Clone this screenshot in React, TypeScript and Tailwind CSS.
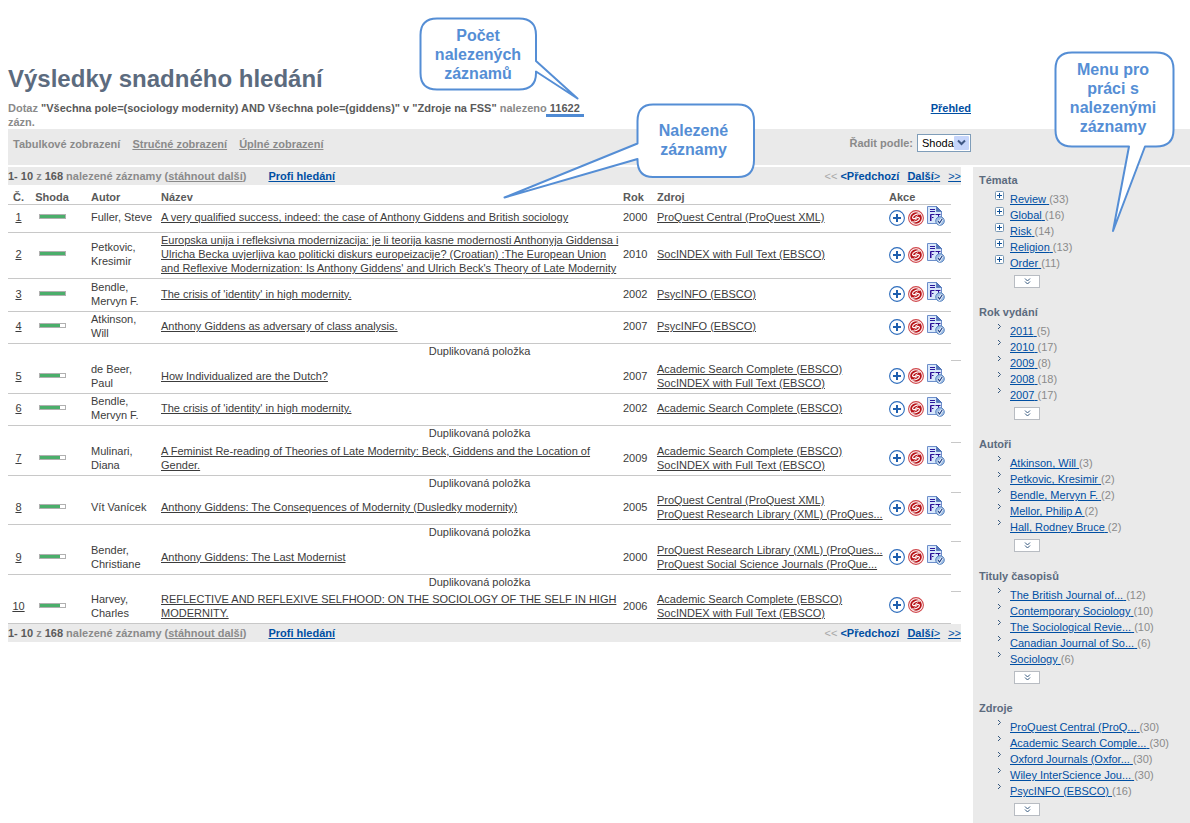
import type { ReactNode } from "react";

type Result = {
  no: number;
  match: number;
  author: string;
  title: string;
  year: number;
  sources: string[];
  duplicate?: boolean;
  fullText?: boolean;
};

const results: Result[] = [
  { no: 1, match: 100, author: "Fuller, Steve", title: "A very qualified success, indeed: the case of Anthony Giddens and British sociology", year: 2000, sources: ["ProQuest Central (ProQuest XML)"], fullText: true },
  { no: 2, match: 100, author: "Petkovic, Kresimir", title: "Europska unija i refleksivna modernizacija: je li teorija kasne modernosti Anthonyja Giddensa i Ulricha Becka uvjerljiva kao politicki diskurs europeizacije? (Croatian) :The European Union and Reflexive Modernization: Is Anthony Giddens' and Ulrich Beck's Theory of Late Modernity", year: 2010, sources: ["SocINDEX with Full Text (EBSCO)"], fullText: true },
  { no: 3, match: 100, author: "Bendle, Mervyn F.", title: "The crisis of 'identity' in high modernity.", year: 2002, sources: ["PsycINFO (EBSCO)"], fullText: true },
  { no: 4, match: 80, author: "Atkinson, Will", title: "Anthony Giddens as adversary of class analysis.", year: 2007, sources: ["PsycINFO (EBSCO)"], fullText: true },
  { no: 5, match: 80, author: "de Beer, Paul", title: "How Individualized are the Dutch?", year: 2007, sources: ["Academic Search Complete (EBSCO)", "SocINDEX with Full Text (EBSCO)"], duplicate: true, fullText: true },
  { no: 6, match: 80, author: "Bendle, Mervyn F.", title: "The crisis of 'identity' in high modernity.", year: 2002, sources: ["Academic Search Complete (EBSCO)"], fullText: true },
  { no: 7, match: 80, author: "Mulinari, Diana", title: "A Feminist Re-reading of Theories of Late Modernity: Beck, Giddens and the Location of Gender.", year: 2009, sources: ["Academic Search Complete (EBSCO)", "SocINDEX with Full Text (EBSCO)"], duplicate: true, fullText: true },
  { no: 8, match: 80, author: "Vít Vanícek", title: "Anthony Giddens: The Consequences of Modernity (Dusledky modernity)", year: 2005, sources: ["ProQuest Central (ProQuest XML)", "ProQuest Research Library (XML) (ProQues..."], duplicate: true, fullText: true },
  { no: 9, match: 80, author: "Bender, Christiane", title: "Anthony Giddens: The Last Modernist", year: 2000, sources: ["ProQuest Research Library (XML) (ProQues...", "ProQuest Social Science Journals (ProQue..."], duplicate: true, fullText: true },
  { no: 10, match: 80, author: "Harvey, Charles", title: "REFLECTIVE AND REFLEXIVE SELFHOOD: ON THE SOCIOLOGY OF THE SELF IN HIGH MODERNITY.", year: 2006, sources: ["Academic Search Complete (EBSCO)", "SocINDEX with Full Text (EBSCO)"], duplicate: true },
];

type Facet = { title: string; tree?: boolean; items: [string, number][] };

const facets: Facet[] = [
  { title: "Témata", tree: true, items: [["Review", 33], ["Global", 16], ["Risk", 14], ["Religion", 13], ["Order", 11]] },
  { title: "Rok vydání", items: [["2011", 5], ["2010", 17], ["2009", 8], ["2008", 18], ["2007", 17]] },
  { title: "Autoři", items: [["Atkinson, Will", 3], ["Petkovic, Kresimir", 2], ["Bendle, Mervyn F.", 2], ["Mellor, Philip A", 2], ["Hall, Rodney Bruce", 2]] },
  { title: "Tituly časopisů", items: [["The British Journal of...", 12], ["Contemporary Sociology", 10], ["The Sociological Revie...", 10], ["Canadian Journal of So...", 6], ["Sociology", 6]] },
  { title: "Zdroje", items: [["ProQuest Central (ProQ...", 30], ["Academic Search Comple...", 30], ["Oxford Journals (Oxfor...", 30], ["Wiley InterScience Jou...", 30], ["PsycINFO (EBSCO)", 16]] },
];

function PlusIcon() {
  return (
    <svg width="16" height="16" viewBox="0 0 16 16" aria-hidden="true">
      <circle cx="8" cy="8" r="7.4" fill="#fff" stroke="#2c6cbc" strokeWidth="1.1" />
      <path d="M8 4v8M4 8h8" stroke="#1f5fae" strokeWidth="2" />
    </svg>
  );
}

function SfxIcon() {
  return (
    <svg width="16" height="16" viewBox="0 0 16 16" aria-hidden="true">
      <circle cx="8" cy="8" r="7.4" fill="#fff" stroke="#d0484c" strokeWidth="1.1" />
      <circle cx="8" cy="8" r="5.8" fill="#b81419" />
      <path d="M12 4.200C9 3.200 4.600 5.400 4.600 7.600c0 1.900 2.700.9 3.900.3 1.300-.7 3-.6 2.900.8-.1 2-4 3.900-7.400 3.100" fill="none" stroke="#fff" strokeWidth="1.200" />
      <path d="M7 7.500L9.800 5.600M6.400 10.400L9.200 8.600" stroke="#fff" strokeWidth=".8" />
    </svg>
  );
}

function FullTextIcon() {
  return (
    <svg width="18" height="20" viewBox="0 0 18 20" aria-hidden="true">
      <path d="M.5.5h9L14.500 5.500V17.500H.500z" fill="#d9e8fb" stroke="#6d8fcb" />
      <path d="M9.500.500V5.500H14.500z" fill="#5578bb" stroke="#3d63ac" strokeWidth=".6" />
      <path d="M3 3.500h5M3 5.500h5" stroke="#2b1a9c" />
      <path d="M3.500 15V8.500H7.500M3.500 11.500H6.500M8.500 8.500h5M11.500 8.500V12" fill="none" stroke="#2b0f96" />
      <path d="M4.500 15V9" stroke="#8478c8" />
      <circle cx="13" cy="15" r="4.300" fill="#9fbfe6" stroke="#5d86c0" />
      <path d="M10.900 14.800l1.700 2.200L15.300 12.700" fill="none" stroke="#fff" strokeWidth="2.600" />
      <path d="M10.900 14.800l1.700 2.200L15.300 12.700" fill="none" stroke="#1d3f86" strokeWidth="1.200" />
    </svg>
  );
}

function TreeIcon() {
  return (
    <svg width="9" height="9" viewBox="0 0 9 9" aria-hidden="true">
      <rect x=".5" y=".5" width="8" height="8" rx="1" fill="#fff" stroke="#7898b5" />
      <path d="M4.500 2v5M2 4.500h5" stroke="#0d4f96" />
    </svg>
  );
}

function ChevronIcon() {
  return (
    <svg width="9" height="9" viewBox="0 0 9 9" aria-hidden="true">
      <path d="M3 1l2.500 2.500L3 6" fill="none" stroke="#36597f" />
    </svg>
  );
}

function MatchBar({ value }: { value: number }) {
  return (
    <div role="img" aria-label={`${value} %`} className="mx-auto mb-1 h-[5px] w-[27px] border border-[#b0b0b0] bg-white">
      <div className="h-full bg-[#4bae6b]" style={{ width: `${value}%` }} />
    </div>
  );
}

function ResultRows({ item }: { item: Result }) {
  const cell = "border-b border-[#c8c8c8] px-0 pt-0 align-middle";
  return (
    <>
      {item.duplicate && (
        <tr className="h-[17px]">
          <td colSpan={7} className="p-0 text-center align-top leading-[14px]">Duplikovaná položka</td>
          <td className="border-b border-[#c8c8c8] p-0" />
        </tr>
      )}
      <tr className={item.no === 1 ? "h-[28px]" : item.no === 2 ? "h-[46px]" : item.no % 2 ? "h-[33px]" : "h-[32px]"}>
        <td className={`${cell} pb-[3px] text-center`}><a href="#zaznam" className="underline">{item.no}</a></td>
        <td className={`${cell} pr-4 pb-0`}><MatchBar value={item.match} /></td>
        <td className={`${cell} pr-2 pb-[3px]`}>{item.author}</td>
        <td className={`${cell} pb-[3px]`}><a href="#zaznam" className="underline">{item.title}</a></td>
        <td className={`${cell} pb-[3px]`}>{item.year}</td>
        <td className={`${cell} pb-[3px] whitespace-nowrap`}>
          {item.sources.map((s) => (
            <a key={s} href="#zdroj" className="block w-fit underline">{s}</a>
          ))}
        </td>
        <td className={`${cell} pb-0`}>
          <div className="flex items-end gap-[3px] pb-[6px]">
            <button type="button" aria-label="Přidat do schránky"><PlusIcon /></button>
            <button type="button" aria-label="SFX"><SfxIcon /></button>
            {item.fullText && <button type="button" aria-label="Plný text"><FullTextIcon /></button>}
          </div>
        </td>
        <td className="p-0" />
      </tr>
    </>
  );
}

function Pager() {
  return (
    <div className="flex h-[18px] items-center justify-between bg-[#eaeaea] text-[11px] font-bold text-[#8a8a8a]">
      <div className="flex gap-[22px]">
        <span>
          <span className="text-[#5a5a5a]">1- 10</span> z <span className="text-[#5a5a5a]">168</span> nalezené záznamy (
          <a href="#dalsi" className="underline">stáhnout další</a>)
        </span>
        <a href="#profi" className="text-[#004fa3] underline">Profi hledání</a>
      </div>
      <div className="flex gap-2 text-[#004fa3]">
        <span><span className="font-normal text-[#a8a8a8]">&lt;&lt;</span> &lt;Předchozí</span>
        <a href="#dalsi" className="underline">Další<span className="font-normal">&gt;</span></a>
        <a href="#konec" className="font-normal underline">&gt;&gt;</a>
      </div>
    </div>
  );
}

function FacetSection({ facet }: { facet: Facet }) {
  return (
    <section className="mb-[17px]">
      <h2 className="text-[11px] leading-[14px] font-bold text-[#5c6b7e]">{facet.title}</h2>
      <ul className="mt-1 mb-1 pl-4">
        {facet.items.map(([label, count]) => (
          <li key={label} className="flex h-4 gap-[6px] whitespace-nowrap text-[#8a8a8a]">
            {facet.tree ? <TreeIcon /> : <ChevronIcon />}
            <span className="leading-4">
              <a href="#filtr" className="text-[#004fa3] underline">{label} </a>({count})
            </span>
          </li>
        ))}
      </ul>
      <button type="button" aria-label={`Další: ${facet.title}`} className="ml-[35px] flex h-[13px] w-[26px] items-center justify-center border border-[#b8bcc2] bg-white">
        <svg width="7" height="7" viewBox="0 0 7 7" aria-hidden="true">
          <path d="M1 .5L3.500 3 6 .500M1 3.500L3.500 6 6 3.500" fill="none" stroke="#36597f" />
        </svg>
      </button>
    </section>
  );
}

function Callout({ place, box, children, width, height, path }: {
  place: string; box: string; children: ReactNode; width: number; height: number; path: string;
}) {
  return (
    <div className={`pointer-events-none absolute ${place}`}>
      <svg width={width} height={height} viewBox={`0 0 ${width} ${height}`} aria-hidden="true">
        <path d={path} fill="#fff" stroke="#558ed5" strokeWidth="2" strokeLinejoin="round" />
      </svg>
      <p className={`absolute flex items-center justify-center text-center text-[16px] leading-[19px] font-bold text-[#558ed5] ${box}`}>{children}</p>
    </div>
  );
}

export default function App() {
  return (
    <div className="relative flex min-h-screen flex-col overflow-hidden bg-white pl-2 font-['Liberation_Sans',Arial,sans-serif] text-[11px] leading-[14px] text-[#3c3c3c]">
      <header className="pt-[64px]">
        <h1 className="text-[24px] leading-[30px] font-bold text-[#5c6b7e]">Výsledky snadného hledání</h1>
        <div className="flex items-start justify-between pt-[7px] pr-[219px] font-bold">
          <p className="max-w-[596px] text-[#8a8a8a]">
            Dotaz <span className="text-[#5a5a5a]">"Všechna pole=(sociology modernity) AND Všechna pole=(giddens)" v "Zdroje na FSS"</span> nalezeno{" "}
            <span className="relative text-[#5a5a5a]">
              11622
              <span className="absolute top-full -right-1 -left-1 h-[3px] bg-[#4f8ad3]" />
            </span>{" "}
            zázn.
          </p>
          <a href="#prehled" className="text-[#004fa3] underline">Přehled</a>
        </div>
      </header>

      <div className="flex h-[36px] items-start justify-between bg-[#eaeaea] pr-[219px] pl-[5px] font-bold text-[#8a8a8a]">
        <nav className="flex gap-3 pt-2">
          <span>Tabulkové zobrazení</span>
          <a href="#strucne" className="underline">Stručné zobrazení</a>
          <a href="#uplne" className="underline">Úplné zobrazení</a>
        </nav>
        <div className="flex items-center gap-1 pt-[5px]">
          <label htmlFor="sort">Řadit podle:</label>
          <div className="relative">
            <select id="sort" className="h-[18px] w-[54px] appearance-none border border-[#7f9db9] bg-white pl-1 text-[11px] leading-4 font-normal text-black">
              <option>Shoda</option>
            </select>
            <svg width="15" height="14" viewBox="0 0 15 14" className="pointer-events-none absolute top-[2px] right-[2px]" aria-hidden="true">
              <rect width="15" height="14" rx="1" fill="#c6d5fb" />
              <path d="M4 4.500l3.500 3.500L11 4.500" fill="none" stroke="#3f5784" strokeWidth="2" />
            </svg>
          </div>
        </div>
      </div>

      <div className="mt-[2px] flex grow gap-3">
        <main className="min-w-0 flex-1">
          <Pager />
          <table className="w-full table-fixed border-separate border-spacing-0">
            <colgroup>
              <col className="w-[21px]" />
              <col className="w-[62px]" />
              <col className="w-[70px]" />
              <col />
              <col className="w-[34px]" />
              <col className="w-[232px]" />
              <col className="w-[62px]" />
              <col className="w-[10px]" />
            </colgroup>
            <thead>
              <tr className="h-[20px] text-left align-bottom text-[#5a5a5a] [&>th]:p-0 [&>th:not(:last-child)]:border-b [&>th:not(:last-child)]:border-[#c8c8c8]">
                <th className="text-center">Č.</th>
                <th><span className="block pr-4 text-center">Shoda</span></th>
                <th>Autor</th>
                <th>Název</th>
                <th>Rok</th>
                <th>Zdroj</th>
                <th>Akce</th>
                <th />
              </tr>
            </thead>
            <tbody>
              {results.map((r) => <ResultRows key={r.no} item={r} />)}
            </tbody>
          </table>
          <Pager />
        </main>
        <aside className="w-[217px] shrink-0 bg-[#eaeaea] pt-[6px] pl-[6px]">
          {facets.map((f) => <FacetSection key={f.title} facet={f} />)}
        </aside>
      </div>

      <Callout
        place="top-[17px] left-[419px]"
        box="top-0 left-0 h-[74px] w-[118px]"
        width={160}
        height={83}
        path="M18 1.500H100Q117 1.500 117 18V44L158.500 81.500 117 54.500V56Q117 72.500 100 72.500H18Q1.500 72.500 1.500 56V18Q1.500 1.500 18 1.500Z"
      >
        Počet<br />nalezených<br />záznamů
      </Callout>
      <Callout
        place="top-[103px] left-[503px]"
        box="top-0 left-[131px] h-[74px] w-[119px]"
        width={253}
        height={96}
        path="M150 1.500H235Q251 1.500 251 18V57Q251 74 235 74H150Q134.500 74 134.500 57V56L1.500 94.500 134.500 40.500V18Q134.500 1.500 150 1.500Z"
      >
        Nalezené<br />záznamy
      </Callout>
      <Callout
        place="top-[51px] right-[15px]"
        box="top-0 left-0 h-[94px] w-[118px]"
        width={121}
        height={182}
        path="M18 1.500H102Q119.500 1.500 119.500 18V79Q119.500 95.500 102 95.500H91L59 180 75 95.500H18Q1.500 95.500 1.500 79V18Q1.500 1.500 18 1.500Z"
      >
        Menu pro<br />práci s<br />nalezenými<br />záznamy
      </Callout>
    </div>
  );
}
